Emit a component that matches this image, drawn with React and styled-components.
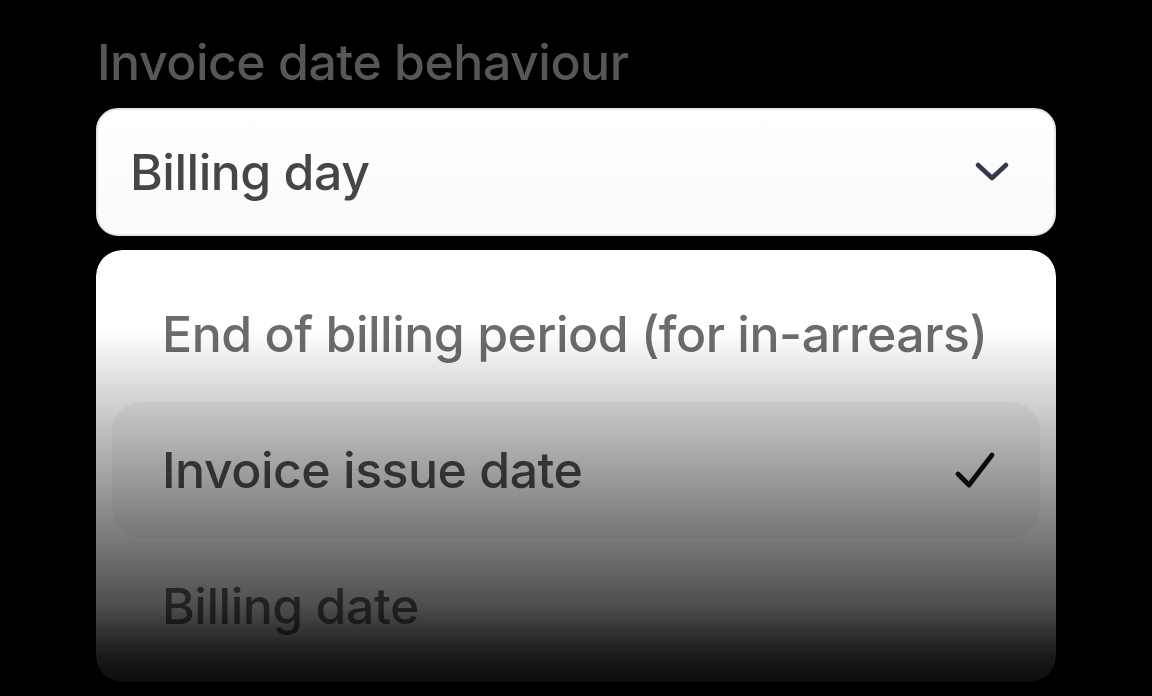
import React, { useState } from "react";
import styled, { createGlobalStyle } from "styled-components";

const GlobalStyle = createGlobalStyle`
  html, body {
    margin: 0;
    padding: 0;
    background: #000;
  }
  body {
    font-family: Inter, "Noto Sans", "Liberation Sans", sans-serif;
    -webkit-font-smoothing: antialiased;
  }
`;

const OPTIONS = [
  "End of billing period (for in-arrears)",
  "Invoice issue date",
  "Billing date",
];

const Page = styled.div`
  width: 1152px;
  height: 696px;
  overflow: hidden;
  padding: 28px 96px 0 96px;
  box-sizing: border-box;
  display: flex;
  flex-direction: column;
`;

const Label = styled.div`
  font-size: 50px;
  font-weight: 500;
  line-height: 68px;
  color: #575757;
  letter-spacing: -0.5px;
  margin-bottom: 12px;
  padding-left: 1px;
`;

const Trigger = styled.button`
  display: flex;
  align-items: center;
  justify-content: space-between;
  height: 128px;
  width: 100%;
  box-sizing: border-box;
  padding: 0 44px 0 32px;
  border: 2px solid #e4e4e4;
  border-radius: 22px;
  background: linear-gradient(to bottom, #ffffff, #fafafa);
  font-family: inherit;
  font-size: 50px;
  font-weight: 500;
  color: #464646;
  letter-spacing: -0.5px;
  cursor: pointer;
`;

const Menu = styled.ul`
  list-style: none;
  margin: 14px 0 0 0;
  padding: 16px 16px 8px 16px;
  height: 432px;
  box-sizing: border-box;
  background: #fff;
  border-radius: 26px;
  -webkit-mask-image: linear-gradient(
    to bottom,
    #000 80px,
    rgba(0, 0, 0, 0.66) 217px,
    rgba(0, 0, 0, 0.3) 357px,
    rgba(0, 0, 0, 0.1) 405px,
    rgba(0, 0, 0, 0.05) 432px
  );
  mask-image: linear-gradient(
    to bottom,
    #000 80px,
    rgba(0, 0, 0, 0.66) 217px,
    rgba(0, 0, 0, 0.3) 357px,
    rgba(0, 0, 0, 0.1) 405px,
    rgba(0, 0, 0, 0.05) 432px
  );
`;

const Item = styled.li`
  display: flex;
  align-items: center;
  justify-content: space-between;
  height: 136px;
  padding: 0 44px 0 50px;
  border-radius: 30px;
  font-size: 50px;
  font-weight: 500;
  letter-spacing: -0.5px;
  color: ${(p) => (p.$selected ? "#4e4e4e" : "#6c6c6c")};
  background: ${(p) => (p.$selected ? "#f5f5f5" : "transparent")};
  cursor: pointer;
`;

const Chevron = () => (
  <svg width="36" height="24" viewBox="0 0 36 24" fill="none">
    <path
      d="M4 5l14 13L32 5"
      stroke="#2f3a4c"
      strokeWidth="4.6"
      strokeLinecap="round"
      strokeLinejoin="round"
    />
  </svg>
);

const Check = () => (
  <svg width="42" height="40" viewBox="0 0 42 40" fill="none">
    <path
      d="M4 24l11 11L38 5"
      stroke="#111"
      strokeWidth="4.8"
      strokeLinecap="round"
      strokeLinejoin="round"
    />
  </svg>
);

export default function App() {
  const [selected, setSelected] = useState(1);

  return (
    <>
      <GlobalStyle />
      <Page>
        <Label>Invoice date behaviour</Label>
        <Trigger>
          <span>Billing day</span>
          <Chevron />
        </Trigger>
        <Menu>
          {OPTIONS.map((opt, i) => (
            <Item
              key={opt}
              $selected={i === selected}
              onClick={() => setSelected(i)}
            >
              <span>{opt}</span>
              {i === selected && <Check />}
            </Item>
          ))}
        </Menu>
      </Page>
    </>
  );
}
